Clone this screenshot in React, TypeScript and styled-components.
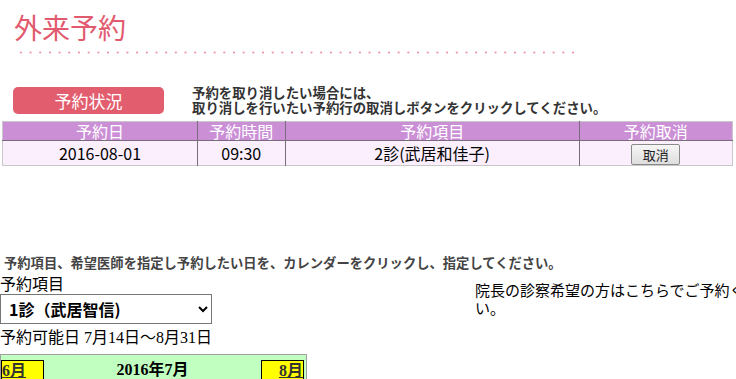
import styled, { createGlobalStyle } from "styled-components"

const Global = createGlobalStyle`
    html, body {
        margin: 0;
        padding: 0;
        background: #fff;
        overflow: hidden;
    }
    body {
        font-family: "Liberation Serif", "Noto Sans CJK JP", serif;
        color: #000;
    }
`

const Page = styled.div`
    width: 736px;
    height: 379px;
    overflow: hidden;
`

const Head = styled.header`
    padding: 11px 0 0 14px;
`

const Title = styled.h1`
    margin: 0;
    font-family: "Noto Sans CJK JP", sans-serif;
    font-weight: 400;
    font-size: 28px;
    line-height: 32px;
    color: #e25a6e;
`

const Dots = styled.div`
    margin: 8px 0 0 2px;
    width: 562px;
    height: 3px;
    background-image: radial-gradient(circle, #ec8c9a 0.9px, transparent 1.2px);
    background-size: 9.7px 3px;
    background-repeat: repeat-x;
`

const StatusBar = styled.div`
    display: flex;
    align-items: flex-start;
    gap: 28px;
    margin: 33px 0 0 13px;
`

const StatusButton = styled.div`
    width: 151px;
    height: 27px;
    border-radius: 5px;
    background: #e25e6e;
    color: #fff;
    font-family: "Noto Sans CJK JP", sans-serif;
    font-size: 17px;
    line-height: 27px;
    text-align: center;
`

const Note = styled.p`
    margin: -2px 0 0;
    font-family: "Noto Sans CJK JP", sans-serif;
    font-weight: 700;
    font-size: 13.4px;
    line-height: 15px;
    color: #333;
`

const Table = styled.table`
    margin: 6px 0 0 2px;
    width: 731px;
    border-collapse: collapse;
    font-family: "Noto Sans CJK JP", sans-serif;
    font-size: 16px;
    border: 1px solid #c8c8c8;
`

const Th = styled.th<{ $w: number }>`
    width: ${p => p.$w}px;
    height: 18px;
    padding: 0;
    background: #cb8fd6;
    color: #fff;
    font-weight: 400;
    line-height: 18px;
    border-left: 1px solid #7a6a7e;
    &:first-child { border-left: none; }
`

const Td = styled.td`
    height: 23px;
    padding: 0;
    background: #fbeffd;
    text-align: center;
    line-height: 23px;
    border-top: 1px solid #7a6a7e;
    border-left: 1px solid #7a6a7e;
    &:first-child { border-left: none; }
`

const CancelButton = styled.button`
    width: 49px;
    height: 21px;
    padding: 0;
    vertical-align: middle;
    font-family: "Noto Sans CJK JP", sans-serif;
    font-size: 13px;
    color: #222;
    border: 1px solid #8a8a8a;
    border-radius: 2px;
    background: linear-gradient(#f6f6f6, #dedede);
`

const Guide = styled.p`
    margin: 89px 0 0 4px;
    font-family: "Noto Sans CJK JP", sans-serif;
    font-weight: 700;
    font-size: 13.3px;
    line-height: 15px;
    color: #444;
`

const FormArea = styled.div`
    display: flex;
    align-items: flex-start;
    margin-top: 4px;
`

const LeftCol = styled.div`
    width: 475px;
    flex: none;
`

const Label = styled.div`
    font-family: "Noto Sans CJK JP", sans-serif;
    font-size: 16px;
    line-height: 18px;
`

const Select = styled.select`
    display: block;
    margin-top: 2px;
    width: 212px;
    height: 30px;
    padding: 0 4px;
    font-family: "Noto Sans CJK JP", sans-serif;
    font-weight: 700;
    font-size: 16px;
    color: #000;
    background: #fff;
    border: 1px solid #767676;
    border-radius: 0;
`

const Period = styled.div`
    margin-top: 4px;
    font-size: 16px;
    line-height: 20px;
`

const Calendar = styled.div`
    margin-top: 6px;
    width: 305px;
    height: 40px;
    padding-top: 5px;
    background: #c0ffc0;
    border: 1px solid #a0a0a0;
`

const CalHead = styled.div`
    display: flex;
    align-items: flex-start;
    justify-content: space-between;
`

const MonthLink = styled.a<{ $align: "left" | "right" }>`
    display: block;
    width: 43px;
    height: 22px;
    box-sizing: border-box;
    margin-right: ${p => (p.$align === "right" ? "2px" : "0")};
    background: #ffff00;
    border: 1px solid #000;
    color: #333;
    font-weight: 700;
    font-size: 16px;
    line-height: 20px;
    text-align: ${p => p.$align};
    text-decoration: underline;
`

const CalTitle = styled.span`
    font-weight: 700;
    font-size: 16px;
    line-height: 20px;
`

const Director = styled.p`
    margin: 7px 0 0;
    width: 318px;
    flex: none;
    font-family: "Noto Sans CJK JP", sans-serif;
    font-size: 15px;
    line-height: 18px;
`

export default function App() {
    return (
        <Page>
            <Global />
            <Head>
                <Title>外来予約</Title>
                <Dots />
            </Head>
            <StatusBar>
                <StatusButton>予約状況</StatusButton>
                <Note>
                    予約を取り消したい場合には、<br />
                    取り消しを行いたい予約行の取消しボタンをクリックしてください。
                </Note>
            </StatusBar>
            <Table>
                <thead>
                    <tr>
                        <Th $w={195}>予約日</Th>
                        <Th $w={87}>予約時間</Th>
                        <Th $w={295}>予約項目</Th>
                        <Th $w={153}>予約取消</Th>
                    </tr>
                </thead>
                <tbody>
                    <tr>
                        <Td>2016-08-01</Td>
                        <Td>09:30</Td>
                        <Td>2診(武居和佳子)</Td>
                        <Td><CancelButton>取消</CancelButton></Td>
                    </tr>
                </tbody>
            </Table>
            <Guide>予約項目、希望医師を指定し予約したい日を、カレンダーをクリックし、指定してください。</Guide>
            <FormArea>
                <LeftCol>
                    <Label>予約項目</Label>
                    <Select defaultValue="1">
                        <option value="1">1診（武居智信)</option>
                        <option value="2">2診（武居和佳子)</option>
                    </Select>
                    <Period>予約可能日 7月14日〜8月31日</Period>
                    <Calendar>
                        <CalHead>
                            <MonthLink $align="left">6月</MonthLink>
                            <CalTitle>2016年7月</CalTitle>
                            <MonthLink $align="right">8月</MonthLink>
                        </CalHead>
                    </Calendar>
                </LeftCol>
                <Director>院長の診察希望の方はこちらでご予約ください。</Director>
            </FormArea>
        </Page>
    )
}
